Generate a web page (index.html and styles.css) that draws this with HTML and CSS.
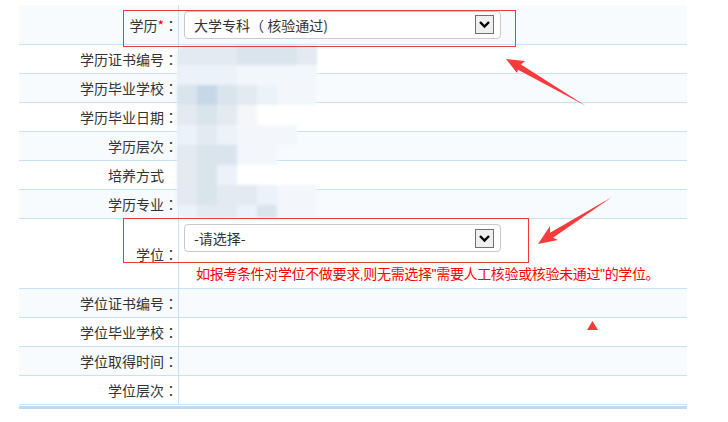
FILE: index.html
```html
<!DOCTYPE html>
<html lang="zh-CN">
<head>
<meta charset="utf-8">
<title>学历信息</title>
<link rel="stylesheet" href="styles.css">
</head>
<body>
<div class="page">
  <div class="form">
    <div class="row row-first">
      <div class="label">学历<span class="req">*</span><span class="p">：</span></div>
      <div class="value">
        <div class="select">
          <span class="select-text">大学专科<span class="p">（</span> 核验通过)</span>
          <span class="select-btn"><svg width="17" height="17" viewBox="0 0 17 17"><polyline points="4,6 8.5,10.5 13,6" fill="none" stroke="#000" stroke-width="2.4"/></svg></span>
        </div>
      </div>
    </div>
    <div class="row"><div class="label">学历证书编号<span class="p">：</span></div><div class="value"></div></div>
    <div class="row"><div class="label">学历毕业学校<span class="p">：</span></div><div class="value"></div></div>
    <div class="row"><div class="label">学历毕业日期<span class="p">：</span></div><div class="value"></div></div>
    <div class="row"><div class="label">学历层次<span class="p">：</span></div><div class="value"></div></div>
    <div class="row"><div class="label">培养方式<span class="p ghost">：</span></div><div class="value"></div></div>
    <div class="row"><div class="label">学历专业<span class="p">：</span></div><div class="value"></div></div>
    <div class="row row-tall">
      <div class="label">学位<span class="p">：</span></div>
      <div class="value value-stack">
        <div class="select">
          <span class="select-text">-请选择-</span>
          <span class="select-btn"><svg width="17" height="17" viewBox="0 0 17 17"><polyline points="4,6 8.5,10.5 13,6" fill="none" stroke="#000" stroke-width="2.4"/></svg></span>
        </div>
        <div class="hint">如报考条件对学位不做要求<span class="a">,</span>则无需选择<span class="a">"</span>需要人工核验或核验未通过<span class="a">"</span>的学位。</div>
      </div>
    </div>
    <div class="row"><div class="label">学位证书编号<span class="p">：</span></div><div class="value"></div></div>
    <div class="row"><div class="label">学位毕业学校<span class="p">：</span></div><div class="value"></div></div>
    <div class="row"><div class="label">学位取得时间<span class="p">：</span></div><div class="value"></div></div>
    <div class="row"><div class="label">学位层次<span class="p">：</span></div><div class="value"></div></div>
    <div class="form-foot"></div>
  </div>

  <div class="blur">
    <i class="a"></i><i class="a"></i><i class="a"></i><i class="b"></i><i class="b"></i><i class="b"></i><i class="a"></i><i class="w"></i>
    <i class="d"></i><i class="d"></i><i class="d"></i><i class="e"></i><i class="e"></i><i class="e"></i><i class="e"></i><i class="w"></i>
    <i class="b"></i><i class="c"></i><i class="b"></i><i class="a"></i><i class="d"></i><i class="e"></i><i class="e"></i><i class="w"></i>
    <i class="a"></i><i class="b"></i><i class="a"></i><i class="f"></i><i class="w"></i><i class="w"></i><i class="w"></i><i class="w"></i>
    <i class="d"></i><i class="a"></i><i class="d"></i><i class="e"></i><i class="e"></i><i class="e"></i><i class="w"></i><i class="w"></i>
    <i class="a"></i><i class="b"></i><i class="b"></i><i class="e"></i><i class="e"></i><i class="w"></i><i class="w"></i><i class="w"></i>
    <i class="a"></i><i class="b"></i><i class="d"></i><i class="w"></i><i class="w"></i><i class="w"></i><i class="w"></i><i class="w"></i>
    <i class="a"></i><i class="b"></i><i class="a"></i><i class="a"></i><i class="d"></i><i class="e"></i><i class="e"></i><i class="w"></i>
    <i class="d"></i><i class="a"></i><i class="a"></i><i class="d"></i><i class="b"></i><i class="e"></i><i class="e"></i><i class="w"></i>
  </div>

  <div class="mark mark-1"></div>
  <div class="mark mark-2"></div>

  <svg class="arrows" width="728" height="422" viewBox="0 0 728 422">
    <polygon points="506,59 525,61 521,64.5 586,106 518,69.7 517,73" fill="#f43c3c"/>
    <polygon points="538,244 550,226 550,232.7 612,197 553,237.7 558,240" fill="#f43c3c"/>
    <polygon points="592.5,321 598,330 587,330" fill="#f43c3c"/>
  </svg>
</div>
</body>
</html>
```
FILE: styles.css
```css
html, body {
  margin: 0;
  padding: 0;
  background: #fff;
}
.page {
  position: relative;
  width: 728px;
  height: 422px;
  overflow: hidden;
  font-family: "Noto Sans CJK SC", "Liberation Sans", sans-serif;
  font-size: 14px;
  color: #333;
}
.p {
  font-family: "Noto Sans CJK TC", "Noto Sans CJK SC", sans-serif;
}
.a {
  font-family: "Liberation Sans", sans-serif;
}
.form {
  margin: 5px 0 0 19px;
  width: 668px;
}
.row {
  display: flex;
  height: 28px;
  border-bottom: 1px solid #c8e2f5;
}
.row:nth-child(odd) {
  background: #f7fbfe;
}
.row-first {
  height: 39px;
}
.row-tall {
  height: 69px;
}
.label {
  width: 159px;
  flex: none;
  border-right: 1px solid #c8e2f5;
  display: flex;
  align-items: center;
  justify-content: flex-end;
  white-space: nowrap;
  line-height: 20px;
}
.req {
  color: #f00;
}
.ghost {
  visibility: hidden;
}
.value {
  flex: 1;
  display: flex;
  align-items: center;
  padding-left: 5px;
}
.value-stack {
  flex-direction: column;
  align-items: flex-start;
  padding-top: 5px;
}
.select {
  width: 317px;
  height: 28px;
  box-sizing: border-box;
  border: 1px solid #c9c9c9;
  border-radius: 4px;
  background: #fff;
  display: flex;
  align-items: center;
  justify-content: space-between;
  padding: 0 6px 0 9px;
  flex: none;
}
.select-text {
  white-space: pre;
  line-height: 20px;
}
.select-btn {
  width: 19px;
  height: 19px;
  box-sizing: border-box;
  border: 1px solid #707070;
  background: #efefef;
  display: flex;
}
.hint {
  margin-top: 11px;
  padding-left: 12px;
  color: #f00;
  line-height: 20px;
  white-space: nowrap;
  letter-spacing: -0.35px;
}
.form-foot {
  height: 3px;
  margin-top: 1px;
  background: #c2d8f4;
}
.blur {
  position: absolute;
  left: 177px;
  top: 45px;
  width: 160px;
  height: 173px;
  display: grid;
  grid-template-columns: repeat(8, 20px);
  grid-auto-rows: 20px;
  filter: blur(1.4px);
  overflow: hidden;
  border-radius: 10px;
}
.blur i { display: block; }
.blur .a { background: #e3eaf1; }
.blur .b { background: #dae4ed; }
.blur .c { background: #c6d8e7; }
.blur .d { background: #ebf2f9; }
.blur .e { background: #f3f7fc; }
.blur .f { background: #f4f6f8; }
.blur .w { background: transparent; }
.mark {
  position: absolute;
  border: 1px solid #f03a3a;
}
.mark-1 {
  left: 123px;
  top: 10px;
  width: 391px;
  height: 35px;
}
.mark-2 {
  left: 123px;
  top: 218px;
  width: 404px;
  height: 43px;
}
.arrows {
  position: absolute;
  left: 0;
  top: 0;
}
```
